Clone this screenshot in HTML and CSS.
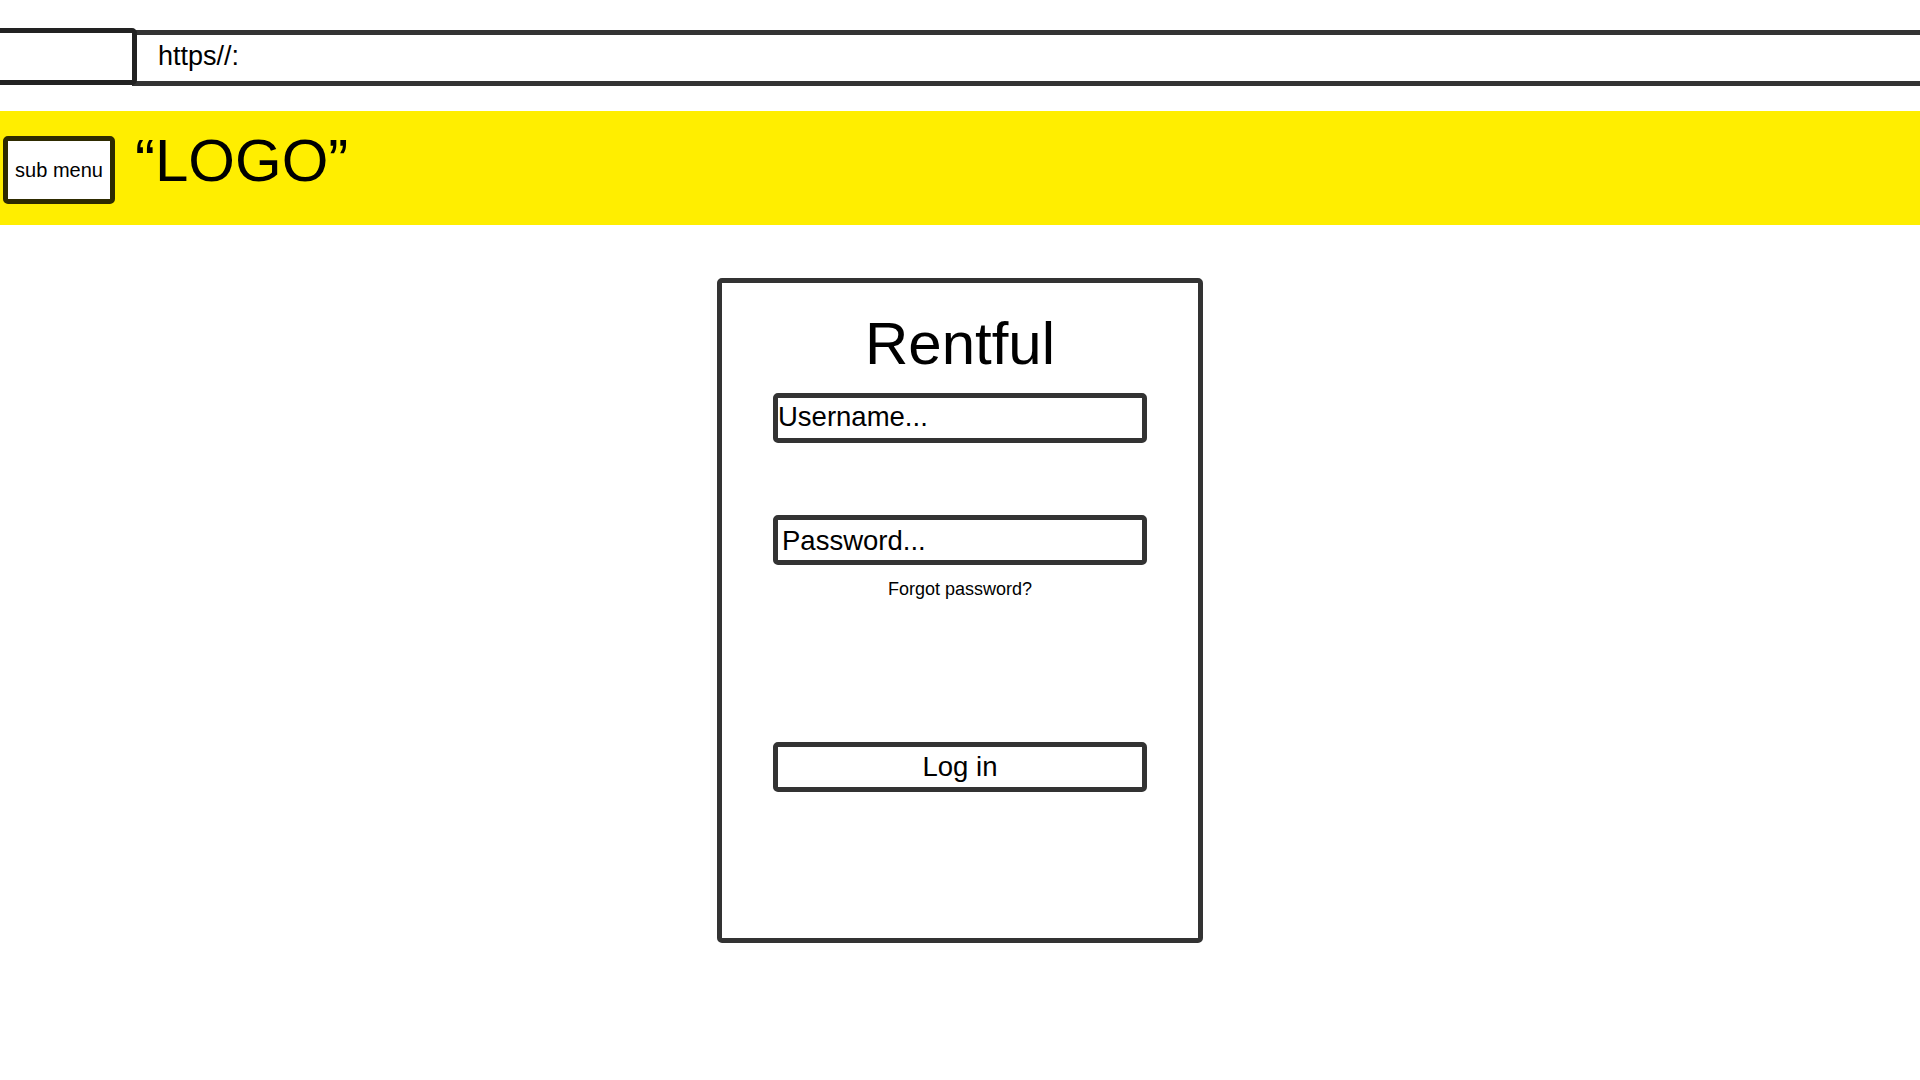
FILE: index.html
```html
<!DOCTYPE html>
<html lang="en">
<head>
<meta charset="utf-8">
<title>Rentful - Log in</title>
<link rel="stylesheet" href="styles.css">
</head>
<body>
  <div class="browser-bar">
    <div class="tab"></div>
    <div class="url">https//:</div>
  </div>

  <header class="site-header">
    <div class="submenu">sub menu</div>
    <div class="logo">“LOGO”</div>
  </header>

  <main class="main">
    <section class="card">
      <h1 class="title">Rentful</h1>
      <div class="field field-user">Username...</div>
      <div class="field field-pass">Password...</div>
      <div class="forgot">Forgot password?</div>
      <div class="login-btn">Log in</div>
    </section>
  </main>
</body>
</html>
```

FILE: styles.css
```css
* {
  box-sizing: border-box;
}

html, body {
  margin: 0;
  padding: 0;
  background: #ffffff;
  font-family: "Liberation Sans", Arial, sans-serif;
  color: #000;
}

body {
  width: 1920px;
  height: 1080px;
  overflow: hidden;
}

/* top browser-like bar */
.browser-bar {
  display: flex;
  align-items: flex-start;
  margin-top: 28px;
}

.tab {
  width: 142px;
  height: 57px;
  margin-left: -5px;
  border: 5px solid #222;
  border-radius: 5px;
  flex: none;
  position: relative;
  z-index: 1;
}

.url {
  flex: 1;
  height: 56px;
  margin-top: 2px;
  margin-left: -5px;
  border-top: 5px solid #333;
  border-bottom: 5px solid #333;
  padding-left: 26px;
  font-size: 27px;
  line-height: 42px;
}

/* yellow header */
.site-header {
  margin-top: 25px;
  height: 114px;
  background: #ffee00;
  display: flex;
  align-items: flex-start;
  padding-top: 25px;
}

.submenu {
  margin-left: 3px;
  width: 112px;
  height: 68px;
  border: 5px solid #2e2b00;
  border-radius: 5px;
  background: #fff;
  display: flex;
  align-items: center;
  justify-content: center;
  font-size: 20px;
  flex: none;
}

.logo {
  margin-left: 20px;
  margin-top: -5px;
  font-size: 60px;
  line-height: 60px;
  white-space: nowrap;
}

/* login card */
.main {
  display: flex;
  justify-content: center;
  padding-top: 53px;
}

.card {
  width: 486px;
  height: 665px;
  border: 5px solid #333;
  border-radius: 5px;
  display: flex;
  flex-direction: column;
  align-items: center;
  padding-top: 31px;
}

.title {
  margin: 0;
  font-weight: normal;
  font-size: 60px;
  line-height: 60px;
  text-align: center;
}

.field {
  width: 374px;
  height: 50px;
  border: 5px solid #333;
  border-radius: 5px;
  font-size: 27.5px;
  line-height: 37px;
  white-space: nowrap;
}

.field-user {
  margin-top: 19px;
  padding-left: 0;
}

.field-pass {
  margin-top: 72px;
  padding-left: 4px;
  padding-top: 2px;
}

.forgot {
  margin-top: 14px;
  font-size: 18px;
  line-height: 21px;
  text-align: center;
}

.login-btn {
  margin-top: 142px;
  width: 374px;
  height: 50px;
  border: 5px solid #333;
  border-radius: 5px;
  font-size: 27.5px;
  line-height: 40px;
  text-align: center;
}
```
